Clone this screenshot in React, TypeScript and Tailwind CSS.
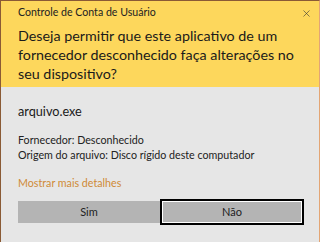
import { X } from "lucide-react";

export default function App() {
  return (
    <div
      className="w-[320px] h-[242px] overflow-hidden border-l border-t border-r border-l-[#8a5a35] border-t-[#8a5a35] border-r-[#e3a574] bg-[#e6e6e6] text-[#1a1a1a]"
      style={{ fontFamily: 'Lato, "Noto Sans", sans-serif' }}
    >
      {/* Yellow header */}
      <div className="bg-[#fdd75c] pl-[17px] pr-[7px] pt-[4px] h-[86px]">
        <div className="flex items-center justify-between h-[16px]">
          <span className="text-[10.6px] text-[#222]">Controle de Conta de Usuário</span>
          <X size={11} strokeWidth={1.3} className="text-[#333]" />
        </div>
        <p className="mt-[5px] text-[14.3px] leading-[19px] text-[#1a1a1a] whitespace-nowrap">
          Deseja permitir que este aplicativo de um
          <br />
          fornecedor desconhecido faça alterações no
          <br />
          seu dispositivo?
        </p>
      </div>

      {/* Details */}
      <div className="pl-[17px] pr-[15px] pt-[15px]">
        <div className="text-[12.7px] leading-[18px]">arquivo.exe</div>
        <div className="mt-[12px] text-[10.7px] leading-[15px] text-[#222]">
          <div>Fornecedor: Desconhecido</div>
          <div>Origem do arquivo: Disco rígido deste computador</div>
        </div>
        <div className="mt-[13px] text-[10.7px] leading-[15px] text-[#cf8a36]">
          Mostrar mais detalhes
        </div>
        <div className="mt-[11px] flex">
          <button className="w-[142px] h-[22px] bg-[#b4b4b4] text-[11px] text-[#222]">Sim</button>
          <button className="w-[144px] h-[26px] -mt-[2px] bg-[#b4b4b4] border-2 border-black outline outline-1 -outline-offset-3 outline-white text-[11px] text-[#222]">
            Não
          </button>
        </div>
      </div>
    </div>
  );
}
